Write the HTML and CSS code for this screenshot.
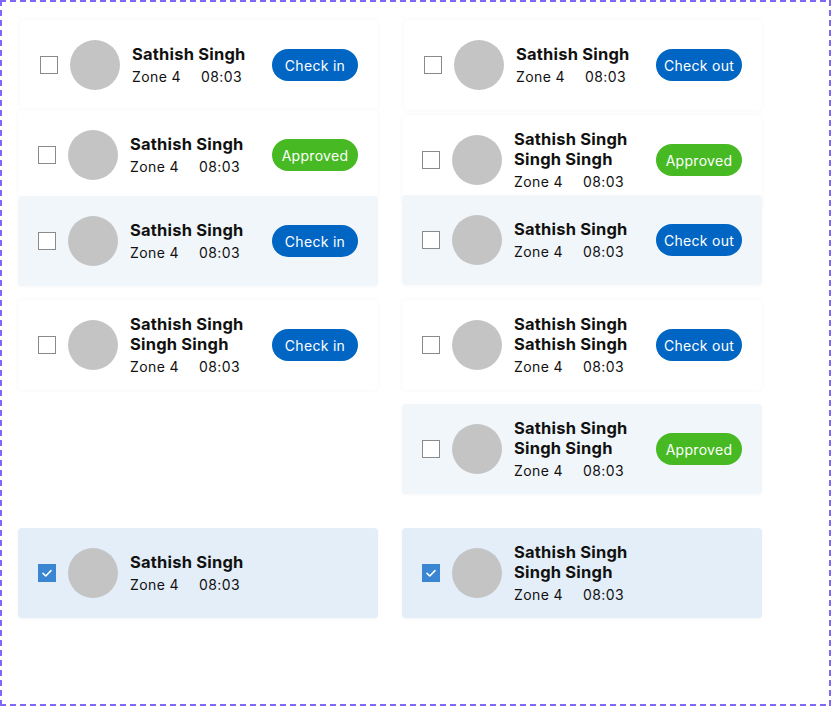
FILE: index.html
```html
<!DOCTYPE html>
<html>
<head>
    <title>Attendance cards</title>
    <link rel="stylesheet" href="styles.css">
</head>
<body>
<div class="board">

    <!-- left column: check in variants -->
    <div class="column">
        <div class="card nudge">
            <span class="check"></span>
            <span class="avatar"></span>
            <div class="info">
                <div class="name">Sathish Singh</div>
                <div class="meta"><span>Zone 4</span><span>08:03</span></div>
            </div>
            <button class="pill blue">Check in</button>
        </div>
        <div class="card">
            <span class="check"></span>
            <span class="avatar"></span>
            <div class="info">
                <div class="name">Sathish Singh</div>
                <div class="meta"><span>Zone 4</span><span>08:03</span></div>
            </div>
            <button class="pill green">Approved</button>
        </div>
        <div class="card tint mt-n4">
            <span class="check"></span>
            <span class="avatar"></span>
            <div class="info">
                <div class="name">Sathish Singh</div>
                <div class="meta"><span>Zone 4</span><span>08:03</span></div>
            </div>
            <button class="pill blue">Check in</button>
        </div>
        <div class="card mt-14">
            <span class="check"></span>
            <span class="avatar"></span>
            <div class="info">
                <div class="name">Sathish Singh<br>Singh Singh</div>
                <div class="meta"><span>Zone 4</span><span>08:03</span></div>
            </div>
            <button class="pill blue">Check in</button>
        </div>
        <div class="card selected mt-138">
            <span class="check on">
                <svg width="18" height="18" viewBox="0 0 18 18"><polyline points="5,9.3 7.8,12 13,6.6" fill="none" stroke="#fff" stroke-width="1.6" stroke-linecap="round" stroke-linejoin="round"/></svg>
            </span>
            <span class="avatar"></span>
            <div class="info">
                <div class="name">Sathish Singh</div>
                <div class="meta"><span>Zone 4</span><span>08:03</span></div>
            </div>
        </div>
    </div>

    <!-- right column: check out variants -->
    <div class="column">
        <div class="card nudge">
            <span class="check"></span>
            <span class="avatar"></span>
            <div class="info">
                <div class="name">Sathish Singh</div>
                <div class="meta"><span>Zone 4</span><span>08:03</span></div>
            </div>
            <button class="pill blue">Check out</button>
        </div>
        <div class="card mt-5">
            <span class="check"></span>
            <span class="avatar"></span>
            <div class="info">
                <div class="name">Sathish Singh<br>Singh Singh</div>
                <div class="meta"><span>Zone 4</span><span>08:03</span></div>
            </div>
            <button class="pill green">Approved</button>
        </div>
        <div class="card tint mt-n10">
            <span class="check"></span>
            <span class="avatar"></span>
            <div class="info">
                <div class="name">Sathish Singh</div>
                <div class="meta"><span>Zone 4</span><span>08:03</span></div>
            </div>
            <button class="pill blue">Check out</button>
        </div>
        <div class="card mt-15">
            <span class="check"></span>
            <span class="avatar"></span>
            <div class="info">
                <div class="name">Sathish Singh<br>Sathish Singh</div>
                <div class="meta"><span>Zone 4</span><span>08:03</span></div>
            </div>
            <button class="pill blue">Check out</button>
        </div>
        <div class="card tint mt-14">
            <span class="check"></span>
            <span class="avatar"></span>
            <div class="info">
                <div class="name">Sathish Singh<br>Singh Singh</div>
                <div class="meta"><span>Zone 4</span><span>08:03</span></div>
            </div>
            <button class="pill green">Approved</button>
        </div>
        <div class="card selected mt-34">
            <span class="check on">
                <svg width="18" height="18" viewBox="0 0 18 18"><polyline points="5,9.3 7.8,12 13,6.6" fill="none" stroke="#fff" stroke-width="1.6" stroke-linecap="round" stroke-linejoin="round"/></svg>
            </span>
            <span class="avatar"></span>
            <div class="info">
                <div class="name">Sathish Singh<br>Singh Singh</div>
                <div class="meta"><span>Zone 4</span><span>08:03</span></div>
            </div>
        </div>
    </div>

</div>
</body>
</html>
```

FILE: styles.css
```css
html, body {
    margin: 0;
    padding: 0;
    background: #fff;
}

.board {
    display: flex;
    align-items: flex-start;
    gap: 24px;
    width: 831px;
    height: 706px;
    box-sizing: border-box;
    padding: 20px 0 0 18px;
    font-family: Inter, "Noto Sans", sans-serif;
    color: #111;
    /* dashed frame round the variants */
    background-image:
        repeating-linear-gradient(90deg, #8266f6 0 6px, transparent 6px 10px),
        repeating-linear-gradient(90deg, #8266f6 0 6px, transparent 6px 10px),
        repeating-linear-gradient(180deg, #8266f6 0 6px, transparent 6px 10px),
        repeating-linear-gradient(180deg, #8266f6 0 6px, transparent 6px 10px);
    background-size: 100% 2px, 100% 2px, 2px 100%, 2px 100%;
    background-position: left top, left bottom, left top, 829px top;
    background-repeat: no-repeat;
}

.column {
    display: flex;
    flex-direction: column;
    width: 360px;
}

.card {
    position: relative;
    display: flex;
    align-items: center;
    height: 90px;
    box-sizing: border-box;
    padding: 0 20px;
    border-radius: 4px;
    background: #fff;
    box-shadow: 0 0 4px rgba(0, 0, 0, 0.045);
}
.card.tint {
    background: #f1f6fb;
    box-shadow: 0 1px 3px rgba(0, 0, 0, 0.03);
}
.card.selected {
    background: #e4eef8;
    box-shadow: 0 1px 3px rgba(0, 0, 0, 0.04);
}

.nudge { margin-left: 2px; }
.mt-n10 { margin-top: -10px; }
.mt-n4 { margin-top: -4px; }
.mt-5 { margin-top: 5px; }
.mt-14 { margin-top: 14px; }
.mt-15 { margin-top: 15px; }
.mt-34 { margin-top: 34px; }
.mt-138 { margin-top: 138px; }

.check {
    flex: none;
    width: 18px;
    height: 18px;
    box-sizing: border-box;
    border: 1px solid #8a8a8a;
    background: #fff;
}
.check.on {
    border: none;
    background: #3a86d2;
}
.check svg {
    display: block;
}

.avatar {
    flex: none;
    width: 50px;
    height: 50px;
    margin-left: 12px;
    border-radius: 50%;
    background: #c4c4c4;
}

.info {
    flex: 1;
    margin-left: 12px;
}
.name {
    font-size: 16.5px;
    font-weight: 700;
    line-height: 20px;
    letter-spacing: 0.2px;
}
.meta {
    display: flex;
    gap: 20px;
    margin-top: 3px;
    font-size: 14px;
    line-height: 20px;
    letter-spacing: 0.4px;
}

.pill {
    flex: none;
    width: 86px;
    height: 32px;
    border: none;
    border-radius: 16px;
    padding: 0;
    color: #fff;
    font-family: Inter, "Noto Sans", sans-serif;
    font-size: 14px;
    letter-spacing: 0.3px;
}
.pill.blue {
    background: #0166c3;
}
.pill.green {
    background: #47ba23;
}
```
